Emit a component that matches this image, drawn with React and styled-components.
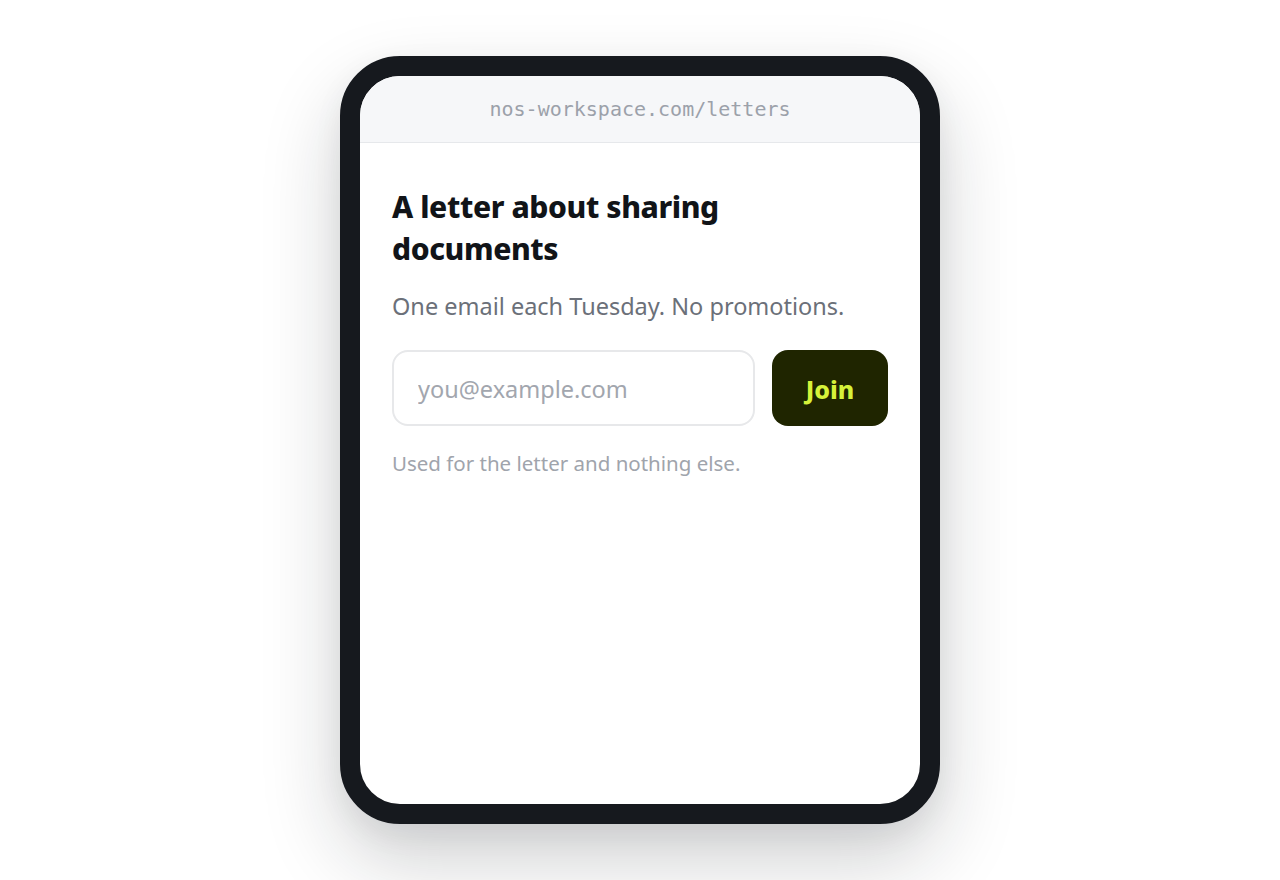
import React from 'react';
import styled, { createGlobalStyle } from 'styled-components';

const GlobalStyle = createGlobalStyle`
  html, body {
    margin: 0;
    padding: 0;
    background: #ffffff;
  }
  body {
    font-family: "Noto Sans", "Open Sans", sans-serif;
  }
`

const Stage = styled.div`
  width: 1280px;
  height: 880px;
  display: flex;
  justify-content: center;
  padding-top: 56px;
  box-sizing: border-box;
`

const PhoneFrame = styled.div`
  width: 600px;
  height: 768px;
  box-sizing: border-box;
  border: 20px solid #16191e;
  border-radius: 60px;
  background: #ffffff;
  overflow: hidden;
  box-shadow: 0 36px 80px rgba(20, 24, 30, 0.2), 0 10px 30px rgba(20, 24, 30, 0.06);
  display: flex;
  flex-direction: column;
`

const AddressBar = styled.div`
  height: 67px;
  flex-shrink: 0;
  background: #f6f7f9;
  border-bottom: 1px solid #e6e8eb;
  display: flex;
  align-items: center;
  justify-content: center;
  font-family: "DejaVu Sans Mono", "Liberation Mono", monospace;
  font-size: 20px;
  color: #9ca1aa;
  box-sizing: border-box;
`

const Content = styled.div`
  padding: 43px 32px 0 32px;
`

const Title = styled.h1`
  margin: 0;
  font-size: 30px;
  line-height: 42px;
  font-weight: 800;
  letter-spacing: -0.4px;
  color: #111418;
  width: 380px;
`

const Lede = styled.p`
  margin: 20px 0 0 0;
  font-size: 23.5px;
  line-height: 33px;
  color: #6b7079;
`

const SignupForm = styled.form`
  margin-top: 27px;
  display: flex;
  gap: 17px;
`

const EmailInput = styled.input`
  flex: 1;
  min-width: 0;
  height: 76px;
  box-sizing: border-box;
  border: 2px solid #e7e8ea;
  border-radius: 16px;
  padding: 2px 24px 0 24px;
  font-family: inherit;
  font-size: 23.5px;
  color: #111418;
  background: #ffffff;
  outline: none;

  &::placeholder {
    color: #a2a6ae;
  }
`

const JoinButton = styled.button`
  width: 116px;
  height: 76px;
  border: none;
  border-radius: 16px;
  background: #1f2500;
  color: #d6f23a;
  font-family: inherit;
  font-size: 25px;
  font-weight: 800;
  padding-top: 2px;
  cursor: pointer;
`

const Note = styled.p`
  margin: 22px 0 0 0;
  font-size: 20.5px;
  line-height: 30px;
  color: #a0a4ac;
`

export default function App() {
  return (
    <>
      <GlobalStyle />
      <Stage>
        <PhoneFrame>
          <AddressBar>nos-workspace.com/letters</AddressBar>
          <Content>
            <Title>A letter about sharing documents</Title>
            <Lede>One email each Tuesday. No promotions.</Lede>
            <SignupForm onSubmit={(e) => e.preventDefault()}>
              <EmailInput type="email" placeholder="you@example.com" autoComplete="off" />
              <JoinButton type="submit">Join</JoinButton>
            </SignupForm>
            <Note>Used for the letter and nothing else.</Note>
          </Content>
        </PhoneFrame>
      </Stage>
    </>
  );
}
